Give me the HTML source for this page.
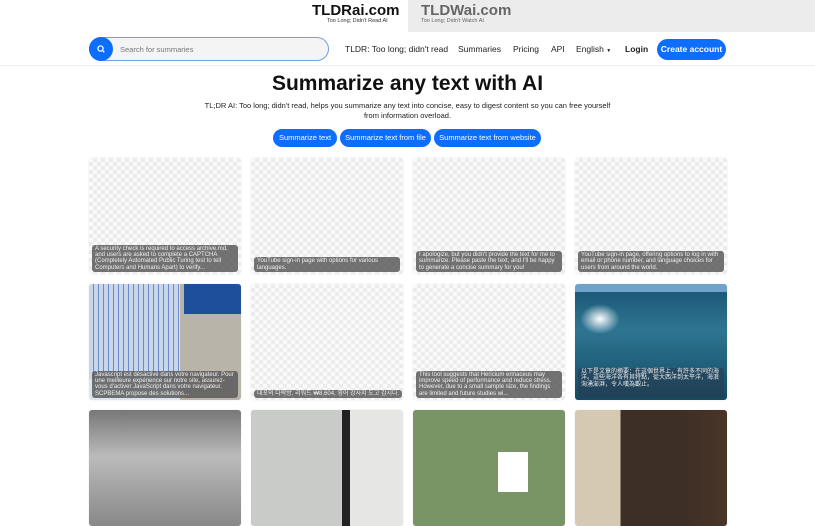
<!DOCTYPE html><html><head><meta charset="utf-8"><style>
*{margin:0;padding:0;box-sizing:border-box}
body{width:815px;height:480px;overflow:hidden;background:#fff;font-family:"Liberation Sans","Noto Sans CJK SC",sans-serif;color:#111;position:relative}
.tab2{position:absolute;left:408px;top:0;width:407px;height:32px;background:#ececec}
.brand{position:absolute;top:2px;font-weight:bold;font-size:15px}
.sub{position:absolute;top:18px;font-size:5.5px;color:#333}
.nav{position:absolute;top:0;left:0;width:815px;height:66px;border-bottom:1px solid #eee}
.search{position:absolute;left:89px;top:37px;width:240px;height:24px;border:1.5px solid #6aa3e8;border-radius:12px;background:#f4f4f4}
.search .q{position:absolute;left:-1px;top:-1px;width:24px;height:24px;border-radius:12px;background:#0d6efd}
.search span{position:absolute;left:30px;top:7px;font-size:7.5px;color:#777}
.links{position:absolute;top:44px;font-size:8.5px;color:#222}
.btn{position:absolute;background:#0d6efd;color:#fff;border-radius:11px;font-size:7.5px;text-align:center}
h1{position:absolute;top:72px;width:815px;text-align:center;font-size:21px;font-weight:bold}
.p{position:absolute;top:101px;left:200px;width:415px;text-align:center;font-size:7.5px;line-height:10px;color:#222}
.card{position:absolute;width:152px;height:116px;border-radius:3px;overflow:hidden;box-shadow:0 0 1px #ccc;background:repeating-conic-gradient(#ececec 0 25%,#fafafa 0 50%) 0 0/8px 8px}
.cap{position:absolute;left:3px;right:3px;bottom:2px;background:rgba(90,90,90,.85);color:#eee;font-size:6px;line-height:6.3px;padding:1px 3px;border-radius:3px}
</style></head><body>
<div class="tab2"></div>
<div class="brand" style="left:312px">TLDRai.com</div><div class="sub" style="left:327px">Too Long; Didn't Read AI</div>
<div class="brand" style="left:421px;color:#666">TLDWai.com</div><div class="sub" style="left:421px;color:#666">Too Long; Didn't Watch AI</div>
<div class="nav"></div>
<div class="search"><div class="q"><svg width="24" height="24"><circle cx="11.5" cy="11.5" r="2.6" fill="none" stroke="#fff" stroke-width="1.3"/><path d="M13.3 13.3l2 2" stroke="#fff" stroke-width="1.3"/></svg></div><span>Search for summaries</span></div>
<div class="links" style="left:345px">TLDR: Too long; didn't read</div>
<div class="links" style="left:458px">Summaries</div>
<div class="links" style="left:513px">Pricing</div>
<div class="links" style="left:551px">API</div>
<div class="links" style="left:576px">English <span style="font-size:5px">▼</span></div>
<div class="links" style="left:625px;font-weight:bold">Login</div>
<div class="btn" style="left:657px;top:39px;width:69px;height:21px;line-height:21px;font-size:8.5px;font-weight:bold">Create account</div>
<h1>Summarize any text with AI</h1>
<div class="p">TL;DR AI: Too long; didn't read, helps you summarize any text into concise, easy to digest content so you can free yourself from information overload.</div>
<div class="btn" style="left:273px;top:129px;width:64px;height:18px;line-height:18px">Summarize text</div>
<div class="btn" style="left:340px;top:129px;width:91px;height:18px;line-height:18px">Summarize text from file</div>
<div class="btn" style="left:434px;top:129px;width:107px;height:18px;line-height:18px">Summarize text from website</div>

<div class="card" style="left:89px;top:158px"><div class="cap">A security check is required to access archive.md, and users are asked to complete a CAPTCHA (Completely Automated Public Turing test to tell Computers and Humans Apart) to verify...</div></div>
<div class="card" style="left:251px;top:158px"><div class="cap">YouTube sign-in page with options for various languages.</div></div>
<div class="card" style="left:413px;top:158px"><div class="cap">I apologize, but you didn't provide the text for me to summarize. Please paste the text, and I'll be happy to generate a concise summary for you!</div></div>
<div class="card" style="left:575px;top:158px"><div class="cap">YouTube sign-in page, offering options to log in with email or phone number, and language choices for users from around the world.</div></div>

<div class="card" style="left:89px;top:284px;background:linear-gradient(90deg,#dbe4ef 0 60%,#b8b4aa 60%)"><div style="position:absolute;left:95px;top:0;width:57px;height:30px;background:#1e4f9a"></div><div style="position:absolute;left:0;top:0;width:90px;height:95px;background:repeating-linear-gradient(90deg,#c9d6ea 0 4px,#6a8ccc 4px 5px)"></div><div class="cap">Javascript est désactivé dans votre navigateur. Pour une meilleure expérience sur notre site, assurez-vous d'activer JavaScript dans votre navigateur. SCPBEMA propose des solutions...</div></div>
<div class="card" style="left:251px;top:284px"><div class="cap" style="right:auto">대포의 다락방, 리워드 ₩8,604, 영어 강사지 도고 감시다.</div></div>
<div class="card" style="left:413px;top:284px"><div class="cap">This tool suggests that Hericium erinaceus may improve speed of performance and reduce stress. However, due to a small sample size, the findings are limited and future studies wi...</div></div>
<div class="card" style="left:575px;top:284px;background:linear-gradient(#6fa3c9 0 7%,#1c5a78 7%,#2e7592 40%,#134a63)"><div style="position:absolute;left:5px;top:20px;width:40px;height:30px;background:radial-gradient(#fff,rgba(255,255,255,0) 70%)"></div><div class="cap" style="background:rgba(40,60,80,.6);height:30px">以下是文章的摘要：在這個世界上，有許多不同的海洋。這些海洋各有其特點，從大西洋到太平洋，海浪洶湧澎湃，令人嘆為觀止。</div></div>

<div class="card" style="left:89px;top:410px;background:linear-gradient(#777,#bbb 40%,#888)"></div>
<div class="card" style="left:251px;top:410px;background:linear-gradient(90deg,#c9cbc8 0 60%,#222 60% 65%,#e6e6e4 65%)"></div>
<div class="card" style="left:413px;top:410px;background:#7a9565"><div style="position:absolute;left:85px;top:42px;width:30px;height:40px;background:#fff"></div></div>
<div class="card" style="left:575px;top:410px;background:linear-gradient(90deg,#d6c9b3 0 30%,#3d2e26 30% 70%,#4a3527)"></div>
</body></html>
